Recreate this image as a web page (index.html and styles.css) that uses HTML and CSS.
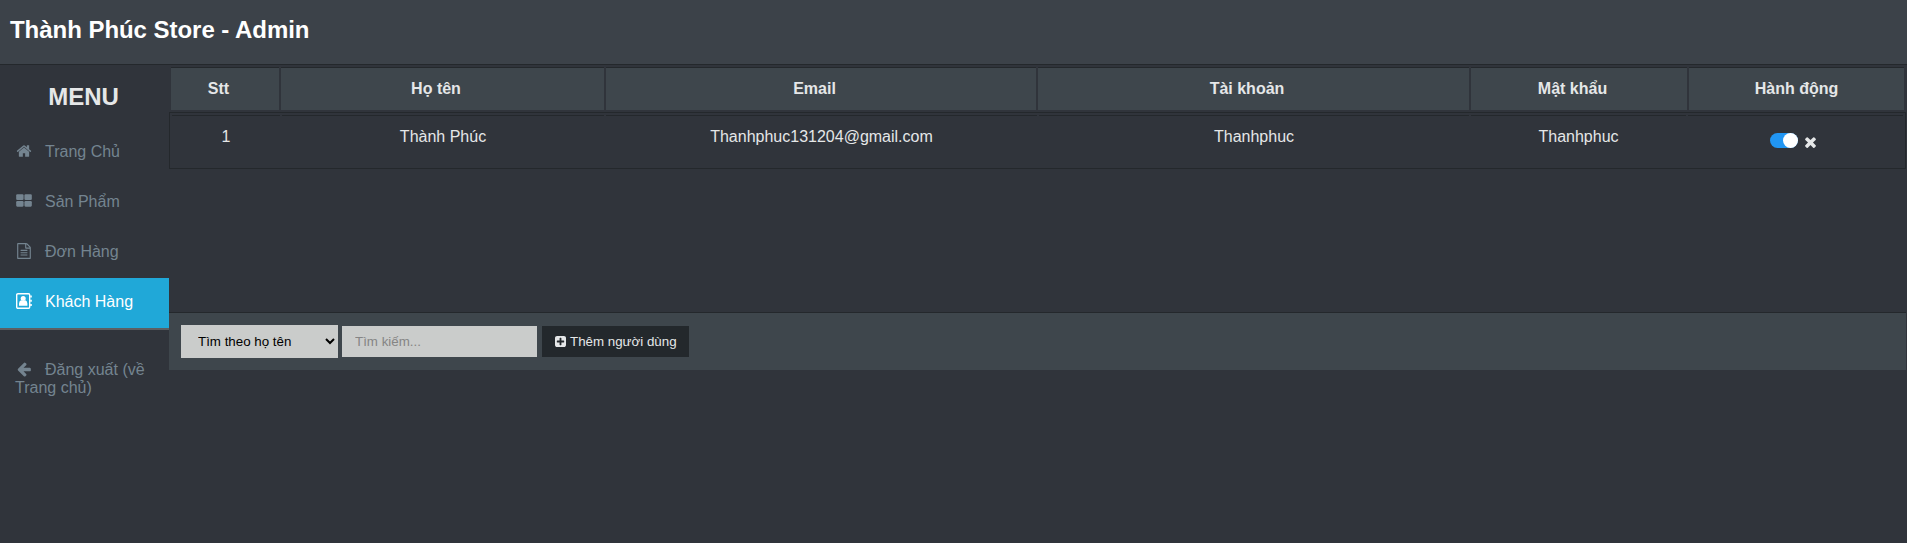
FILE: index.html
```html
<!DOCTYPE html>
<html lang="vi">
<head>
<meta charset="utf-8">
<title>Thành Phúc Store - Admin</title>
<link rel="stylesheet" href="styles.css">
</head>
<body>
<header class="header"><h2 class="brand">Thành Phúc Store - Admin</h2></header>
<div class="layout">
  <aside class="sidebar">
    <h2 class="menu-title">MENU</h2>
    <a class="nav-item"><svg class="icon" viewBox="0 0 1792 1792"><path d="M1472 992v480q0 26-19 45t-45 19h-384v-384h-256v384h-384q-26 0-45-19t-19-45v-480q0-1 .5-3t.5-3l575-474 575 474q1 2 1 6zm223-69l-62 74q-8 9-21 11h-3q-13 0-21-7l-692-577-692 577q-12 8-24 7-13-2-21-11l-62-74q-8-10-7-23.5t11-21.5l719-599q32-26 76-26t76 26l244 204v-195q0-14 9-23t23-9h192q14 0 23 9t9 23v408l219 182q10 8 11 21.5t-7 23.5z"/></svg>Trang Chủ</a>
    <a class="nav-item"><svg class="icon" viewBox="0 0 1792 1792"><rect x="20" y="148" width="830" height="640" rx="128"/><rect x="942" y="148" width="830" height="640" rx="128"/><rect x="20" y="896" width="830" height="640" rx="128"/><rect x="942" y="896" width="830" height="640" rx="128"/></svg>Sản Phẩm</a>
    <a class="nav-item"><svg class="icon" viewBox="0 0 1792 1792"><path d="M1596 380q28 28 48 76t20 88v1152q0 40-28 68t-68 28h-1344q-40 0-68-28t-28-68v-1600q0-40 28-68t68-28h896q40 0 88 20t76 48zm-444-244v376h376q-10-29-22-41l-313-313q-12-12-41-22zm384 1528v-1024h-416q-40 0-68-28t-28-68v-416h-768v1536h1280zm-1024-864q0-14 9-23t23-9h704q14 0 23 9t9 23v64q0 14-9 23t-23 9h-704q-14 0-23-9t-9-23v-64zm736 224q14 0 23 9t9 23v64q0 14-9 23t-23 9h-704q-14 0-23-9t-9-23v-64q0-14 9-23t23-9h704zm0 256q14 0 23 9t9 23v64q0 14-9 23t-23 9h-704q-14 0-23-9t-9-23v-64q0-14 9-23t23-9h704z"/></svg>Đơn Hàng</a>
    <a class="nav-item active"><svg class="icon" viewBox="0 0 16 16"><rect x="0.7" y="0.7" width="13" height="14.6" rx="1.2" fill="none" stroke="currentColor" stroke-width="1.4"/><circle cx="7.2" cy="5.5" r="2.5"/><path d="M3 12.7V10.6Q3.2 7.6 5.1 7.3Q7.2 8.8 9.3 7.3Q11.2 7.6 11.4 10.6V12.7Z"/><path d="M14.2 2.5h1.6v2h-1.6zM14.2 6.8h1.6v2h-1.6zM14.2 11h1.6v2h-1.6z"/></svg>Khách Hàng</a>
    <a class="nav-item logout"><svg class="icon" viewBox="0 0 1792 1792"><path d="M1664 896v128q0 53-32.5 90.5t-84.5 37.5h-704l293 294q38 36 38 90t-38 90l-75 76q-37 37-90 37-52 0-91-37l-651-652q-37-37-37-90 0-52 37-91l651-650q38-38 91-38 52 0 90 38l75 74q38 38 38 91t-38 91l-293 293h704q52 0 84.5 37.5t32.5 90.5z"/></svg>Đăng xuất (về Trang chủ)</a>
  </aside>
  <main class="main">
    <div class="grid head">
      <div class="th">Stt</div><div class="th">Họ tên</div><div class="th">Email</div><div class="th">Tài khoản</div><div class="th">Mật khẩu</div><div class="th plain">Hành động</div>
    </div>
    <div class="rows">
      <div class="grid body-row">
        <div class="td">1</div><div class="td">Thành Phúc</div><div class="td">Thanhphuc131204@gmail.com</div><div class="td">Thanhphuc</div><div class="td">Thanhphuc</div>
        <div class="td actions"><span class="switch"><span class="knob"></span></span><svg class="close" viewBox="302 238 1188 1316"><path d="M1490 1322q0 40-28 68l-136 136q-28 28-68 28t-68-28l-294-294-294 294q-28 28-68 28t-68-28l-136-136q-28-28-28-68t28-68l294-294-294-294q-28-28-28-68t28-68l136-136q28-28 68-28t68 28l294 294 294-294q28-28 68-28t68 28l136 136q28 28 28 68t-28 68l-294 294 294 294q28 28 28 68z"/></svg></div>
      </div>
    </div>
    <div class="toolbar">
      <select class="filter"><option>Tìm theo họ tên</option></select>
      <input class="search" type="text" placeholder="Tìm kiếm...">
      <button class="add"><svg class="plus" viewBox="128 128 1536 1536"><path d="M1408 960v-128q0-26-19-45t-45-19h-320v-320q0-26-19-45t-45-19h-128q-26 0-45 19t-19 45v320h-320q-26 0-45 19t-19 45v128q0 26 19 45t45 19h320v320q0 26 19 45t45 19h128q26 0 45-19t19-45v-320h320q26 0 45-19t19-45zm256-544v960q0 119-84.5 203.5t-203.5 84.5h-960q-119 0-203.5-84.5t-84.5-203.5v-960q0-119 84.5-203.5t203.5-84.5h960q119 0 203.5 84.5t84.5 203.5z"/></svg>Thêm người dùng</button>
    </div>
  </main>
</div>
</body>
</html>
```

FILE: styles.css
```css
* { box-sizing: border-box; }
body {
  margin: 0;
  height: 543px;
  overflow: hidden;
  background: #30343b;
  color: #e5e7e8;
  font: 16px/18px "Liberation Sans", Arial, sans-serif;
}
svg { fill: currentColor; }
.header {
  height: 65px;
  padding: 16px 10px;
  background: #3c4249;
  border-bottom: 1px solid #24282c;
}
.brand { margin: 0; color: #fff; font-size: 24px; line-height: 28px; letter-spacing: -0.04px; }
.layout { display: flex; }
.sidebar { width: 169px; flex: none; }
.menu-title { margin: 0; padding: 18px 2px 17px 0; text-align: center; font-size: 24px; line-height: 28px; }
.nav-item { display: block; height: 50px; padding: 15px 15px; color: #748490; }
.nav-item.active {
  height: 52px;
  background: #20a8d8;
  color: #fff;
  border-bottom: 2px solid #5c5f62;
}
.icon { width: 16px; height: 16px; margin: 0 13px 0 1px; vertical-align: -2px; }
.nav-item.logout { padding-top: 31px; height: 80px; }
.main { flex: 1; min-width: 0; }
.grid { display: grid; grid-template-columns: 108px 323px 430px 431px 216px 215px; column-gap: 2px; }
.head { padding: 2px 0 0 2px; }
.th {
  height: 43px;
  padding: 12px 13px 0 0;
  background: #3e464c;
  border-top: 1px solid #24282c;
  font-weight: bold;
  text-align: center;
}
.th.plain { padding-right: 0; }
.rows { height: 202px; padding-top: 2px; }
.body-row {
  width: 1737px;
  height: 57px;
  padding: 2px 0 0 2px;
  border: 1px solid #24282c;
  grid-template-columns: 108px 322px 431px 430px 215px 215px;
}
.td { height: 51px; padding-top: 12px; border-top: 1px solid #24282c; text-align: center; }
.actions { display: flex; padding: 17px 0 0 82px; gap: 7px; }
.switch { display: flex; justify-content: flex-end; width: 28px; height: 15px; border-radius: 8px; background: #2196f3; }
.knob { width: 15px; height: 15px; border-radius: 50%; background: #fff; }
.close { width: 11px; height: 12px; margin-top: 2.5px; }
.toolbar {
  display: flex;
  align-items: center;
  width: 1737px;
  height: 58px;
  padding: 0 12px;
  background: #3e464c;
  border-top: 1px solid #24282c;
}
.filter, .search, .add { border: 0; border-radius: 0; font: 13.333px "Liberation Sans", Arial, sans-serif; }
.filter { width: 157px; height: 33px; padding: 0 13px; background: #cacccb; color: #000; }
.search { width: 195px; height: 31px; margin-left: 4px; padding: 0 13px; background: #cacccb; }
.search::placeholder { color: #858585; }
.add { display: flex; align-items: center; width: 147px; height: 31px; margin-left: 5px; padding: 0 13px; gap: 4px; background: #23282c; color: #e5e7e8; white-space: nowrap; }
.plus { width: 11px; height: 11px; flex: none; }
```
